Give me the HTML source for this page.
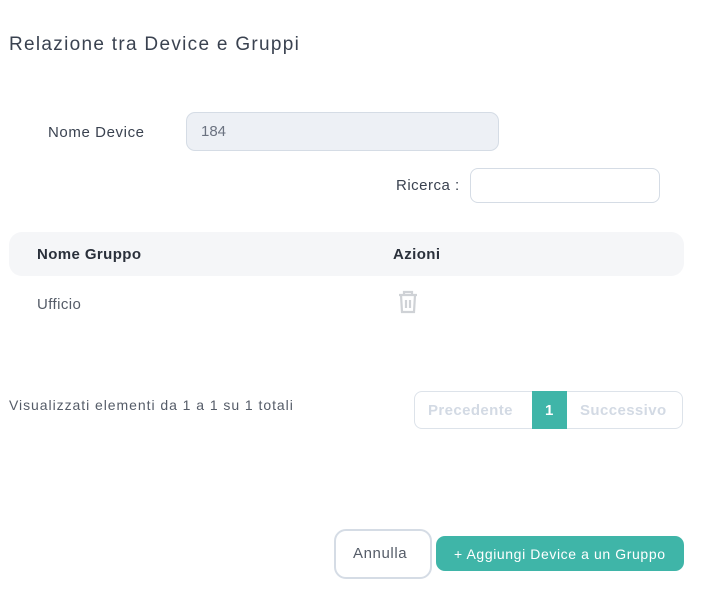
<!DOCTYPE html>
<html><head><style>
body{margin:0;width:703px;height:589px;background:#fff;font-family:"Liberation Sans",sans-serif;position:relative;overflow:hidden}
.a{position:absolute;white-space:nowrap}
</style></head><body>
<div class="a" style="left:9px;top:34px;font-size:19px;color:#3a4250;letter-spacing:1.3px">Relazione tra Device e Gruppi</div>
<div class="a" style="left:48px;top:124px;font-size:15px;color:#3a4250;letter-spacing:0.6px">Nome Device</div>
<div class="a" style="left:186px;top:112px;width:311px;height:37px;background:#edf0f5;border:1.5px solid #d5dce5;border-radius:9px"></div>
<div class="a" style="left:201px;top:123px;font-size:15px;color:#6b7280">184</div>
<div class="a" style="left:396px;top:177px;font-size:15px;color:#3a4250;letter-spacing:0.5px">Ricerca :</div>
<div class="a" style="left:470px;top:168px;width:188px;height:33px;border:1.5px solid #d5dce5;border-radius:8px"></div>
<div class="a" style="left:9px;top:232px;width:675px;height:44px;background:#f5f6f8;border-radius:13px"></div>
<div class="a" style="left:37px;top:246px;font-size:15px;font-weight:bold;color:#2a303b;letter-spacing:0.4px">Nome Gruppo</div>
<div class="a" style="left:393px;top:246px;font-size:15px;font-weight:bold;color:#2a303b;letter-spacing:0.4px">Azioni</div>
<div class="a" style="left:37px;top:296px;font-size:15px;color:#555c68;letter-spacing:0.4px">Ufficio</div>
<svg class="a" style="left:397px;top:290px" width="22" height="24" viewBox="0 0 22 24"><path d="M7 4V2h8v2M2 5h18M4 5l1 17h12l1-17M9 10v8M13 10v8" fill="none" stroke="#cfd2d6" stroke-width="2.2"/></svg>
<div class="a" style="left:9px;top:397px;font-size:14px;color:#555c68;letter-spacing:0.95px">Visualizzati elementi da 1 a 1 su 1 totali</div>
<div class="a" style="left:414px;top:391px;width:267px;height:36px;border:1px solid #dde3ea;border-radius:8px"></div>
<div class="a" style="left:428px;top:402px;font-size:15px;font-weight:bold;color:#d3dae4;letter-spacing:0.4px">Precedente</div>
<div class="a" style="left:532px;top:391px;width:35px;height:38px;background:#3fb5a8"></div>
<div class="a" style="left:545px;top:402px;font-size:15px;font-weight:bold;color:#fff">1</div>
<div class="a" style="left:580px;top:402px;font-size:15px;font-weight:bold;color:#d3dae4;letter-spacing:0.4px">Successivo</div>
<div class="a" style="left:334px;top:529px;width:94px;height:46px;border:2px solid #d5dce5;border-radius:12px"></div>
<div class="a" style="left:353px;top:545px;font-size:15px;color:#555c68;letter-spacing:0.6px">Annulla</div>
<div class="a" style="left:436px;top:536px;width:248px;height:35px;background:#3fb5a8;border-radius:9px"></div>
<div class="a" style="left:454px;top:546px;font-size:14px;color:#fff;letter-spacing:0.6px">+ Aggiungi Device a un Gruppo</div>
</body></html>
